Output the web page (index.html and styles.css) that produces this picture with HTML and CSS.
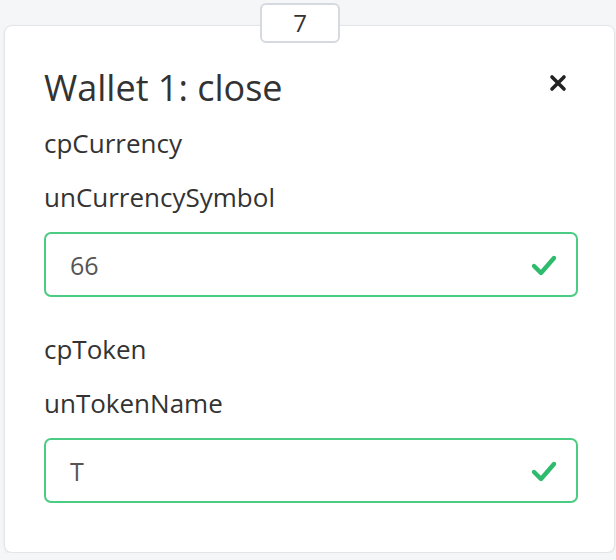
FILE: index.html
```html
<!DOCTYPE html>
<html>
<head>
<meta charset="utf-8">
<link rel="stylesheet" href="styles.css">
</head>
<body>
<div class="stage">
  <div class="badge">7</div>
  <div class="card">
    <div class="head">
      <h2 class="title">Wallet 1: close</h2>
      <span class="close" aria-label="close">
        <svg width="18" height="18" viewBox="0 0 18 18"><path d="M3 3 L15 15 M15 3 L3 15" stroke="#222" stroke-width="3.6" stroke-linecap="round"/></svg>
      </span>
    </div>
    <div class="group">
      <div class="label">cpCurrency</div>
      <div class="label">unCurrencySymbol</div>
      <div class="field">
        <span class="value">66</span>
        <svg class="check" width="28" height="24" viewBox="0 0 28 24"><path d="M4 13 L11 20 L24 5" fill="none" stroke="#2ebc6c" stroke-width="4.4" stroke-linecap="round" stroke-linejoin="round"/></svg>
      </div>
    </div>
    <div class="group">
      <div class="label">cpToken</div>
      <div class="label">unTokenName</div>
      <div class="field">
        <span class="value">T</span>
        <svg class="check" width="28" height="24" viewBox="0 0 28 24"><path d="M4 13 L11 20 L24 5" fill="none" stroke="#2ebc6c" stroke-width="4.4" stroke-linecap="round" stroke-linejoin="round"/></svg>
      </div>
    </div>
  </div>
</div>
</body>
</html>
```
FILE: styles.css
```css
html, body {
  margin: 0;
  padding: 0;
  background: #f5f6f8;
  font-family: "Open Sans", "Liberation Sans", sans-serif;
}
.stage {
  position: relative;
  padding: 25px 1px 0 4px;
}
.badge {
  position: absolute;
  left: 260px;
  top: 3px;
  width: 76px;
  height: 36px;
  border: 2px solid #d6dae0;
  border-radius: 6px;
  background: #fff;
  color: #333;
  font-size: 24px;
  line-height: 36px;
  text-align: center;
  z-index: 2;
}
.card {
  background: #fff;
  border: 1px solid #e3e5e8;
  border-radius: 8px;
  box-shadow: 0 1px 3px rgba(0,0,0,0.06);
  height: 528px;
  box-sizing: border-box;
  padding: 38px 36px 0 39px;
}
.head {
  display: flex;
  align-items: center;
  justify-content: space-between;
  height: 48px;
}
.title {
  margin: 0;
  font-size: 36px;
  font-weight: 400;
  color: #333;
  line-height: 48px;
}
.close {
  display: flex;
  margin-right: 11px;
  margin-top: -11px;
}
.group {
  display: flex;
  flex-direction: column;
  gap: 16px;
  margin-top: 12px;
}
.group + .group {
  margin-top: 33px;
}
.label {
  font-size: 26px;
  line-height: 38px;
  color: #333;
}
.field {
  display: flex;
  align-items: center;
  justify-content: space-between;
  height: 65px;
  box-sizing: border-box;
  border: 2px solid #4ccb82;
  border-radius: 7px;
  padding: 0 18px 0 24px;
}
.value {
  font-size: 25px;
  color: #555;
}
.check {
  display: block;
}
```
